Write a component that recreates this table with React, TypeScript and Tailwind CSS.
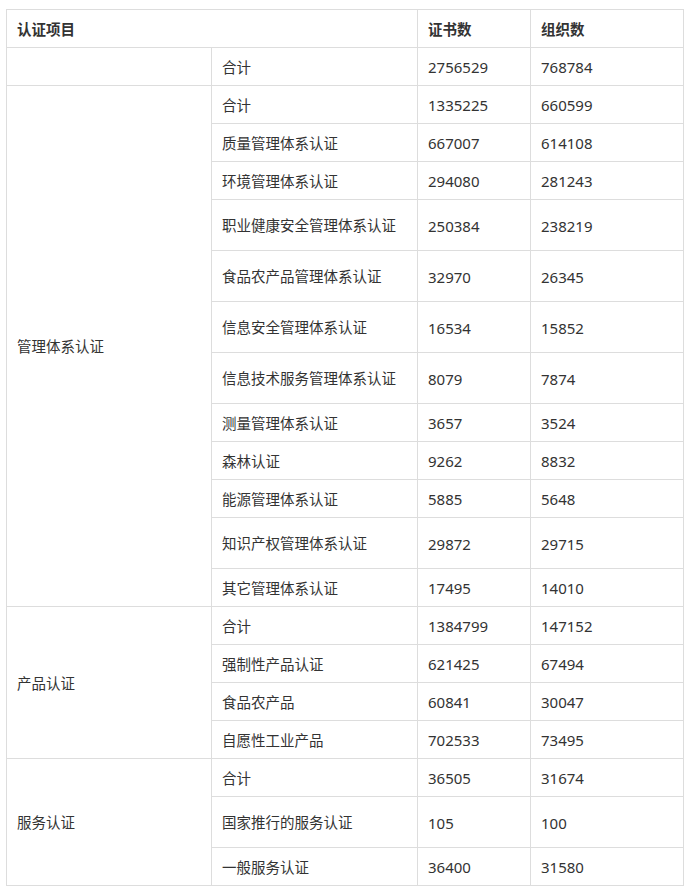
import React from 'react';

type Row = { sub: string; certs: string; orgs: string; tall?: boolean };
type Group = { name: string; rows: Row[] };

const groups: Group[] = [
    { name: '', rows: [{ sub: '合计', certs: '2756529', orgs: '768784' }] },
    {
        name: '管理体系认证',
        rows: [
            { sub: '合计', certs: '1335225', orgs: '660599' },
            { sub: '质量管理体系认证', certs: '667007', orgs: '614108' },
            { sub: '环境管理体系认证', certs: '294080', orgs: '281243' },
            { sub: '职业健康安全管理体系认证', certs: '250384', orgs: '238219', tall: true },
            { sub: '食品农产品管理体系认证', certs: '32970', orgs: '26345', tall: true },
            { sub: '信息安全管理体系认证', certs: '16534', orgs: '15852', tall: true },
            { sub: '信息技术服务管理体系认证', certs: '8079', orgs: '7874', tall: true },
            { sub: '测量管理体系认证', certs: '3657', orgs: '3524' },
            { sub: '森林认证', certs: '9262', orgs: '8832' },
            { sub: '能源管理体系认证', certs: '5885', orgs: '5648' },
            { sub: '知识产权管理体系认证', certs: '29872', orgs: '29715', tall: true },
            { sub: '其它管理体系认证', certs: '17495', orgs: '14010' },
        ],
    },
    {
        name: '产品认证',
        rows: [
            { sub: '合计', certs: '1384799', orgs: '147152' },
            { sub: '强制性产品认证', certs: '621425', orgs: '67494' },
            { sub: '食品农产品', certs: '60841', orgs: '30047' },
            { sub: '自愿性工业产品', certs: '702533', orgs: '73495' },
        ],
    },
    {
        name: '服务认证',
        rows: [
            { sub: '合计', certs: '36505', orgs: '31674' },
            { sub: '国家推行的服务认证', certs: '105', orgs: '100', tall: true },
            { sub: '一般服务认证', certs: '36400', orgs: '31580' },
        ],
    },
];

const cell = 'border border-[#dddddd] px-[10px] pt-[2px] pb-0 align-middle text-left';
const num = `${cell} text-[15px]`;

const App: React.FC = () => {
    return (
        <div className="bg-white pt-[9px] pl-[6px] pb-[10px] text-[14.5px] text-[#333333] font-['Noto_Sans','Noto_Sans_CJK_SC',sans-serif]">
            <table className="w-[677px] table-fixed border-collapse">
                <colgroup>
                    <col className="w-[205px]" />
                    <col className="w-[206px]" />
                    <col className="w-[113px]" />
                    <col className="w-[153px]" />
                </colgroup>
                <thead>
                    <tr className="h-[38px]">
                        <th colSpan={2} className={`${cell} font-bold`}>认证项目</th>
                        <th className={`${cell} font-bold`}>证书数</th>
                        <th className={`${cell} font-bold`}>组织数</th>
                    </tr>
                </thead>
                <tbody>
                    {groups.map((group, gi) =>
                        group.rows.map((row, ri) => (
                            <tr key={`${gi}-${ri}`} className={row.tall ? 'h-[51px]' : 'h-[38px]'}>
                                {ri === 0 && (
                                    <td rowSpan={group.rows.length} className={cell}>
                                        {group.name}
                                    </td>
                                )}
                                <td className={cell}>{row.sub}</td>
                                <td className={num}>{row.certs}</td>
                                <td className={num}>{row.orgs}</td>
                            </tr>
                        ))
                    )}
                </tbody>
            </table>
        </div>
    );
};

export default App;
